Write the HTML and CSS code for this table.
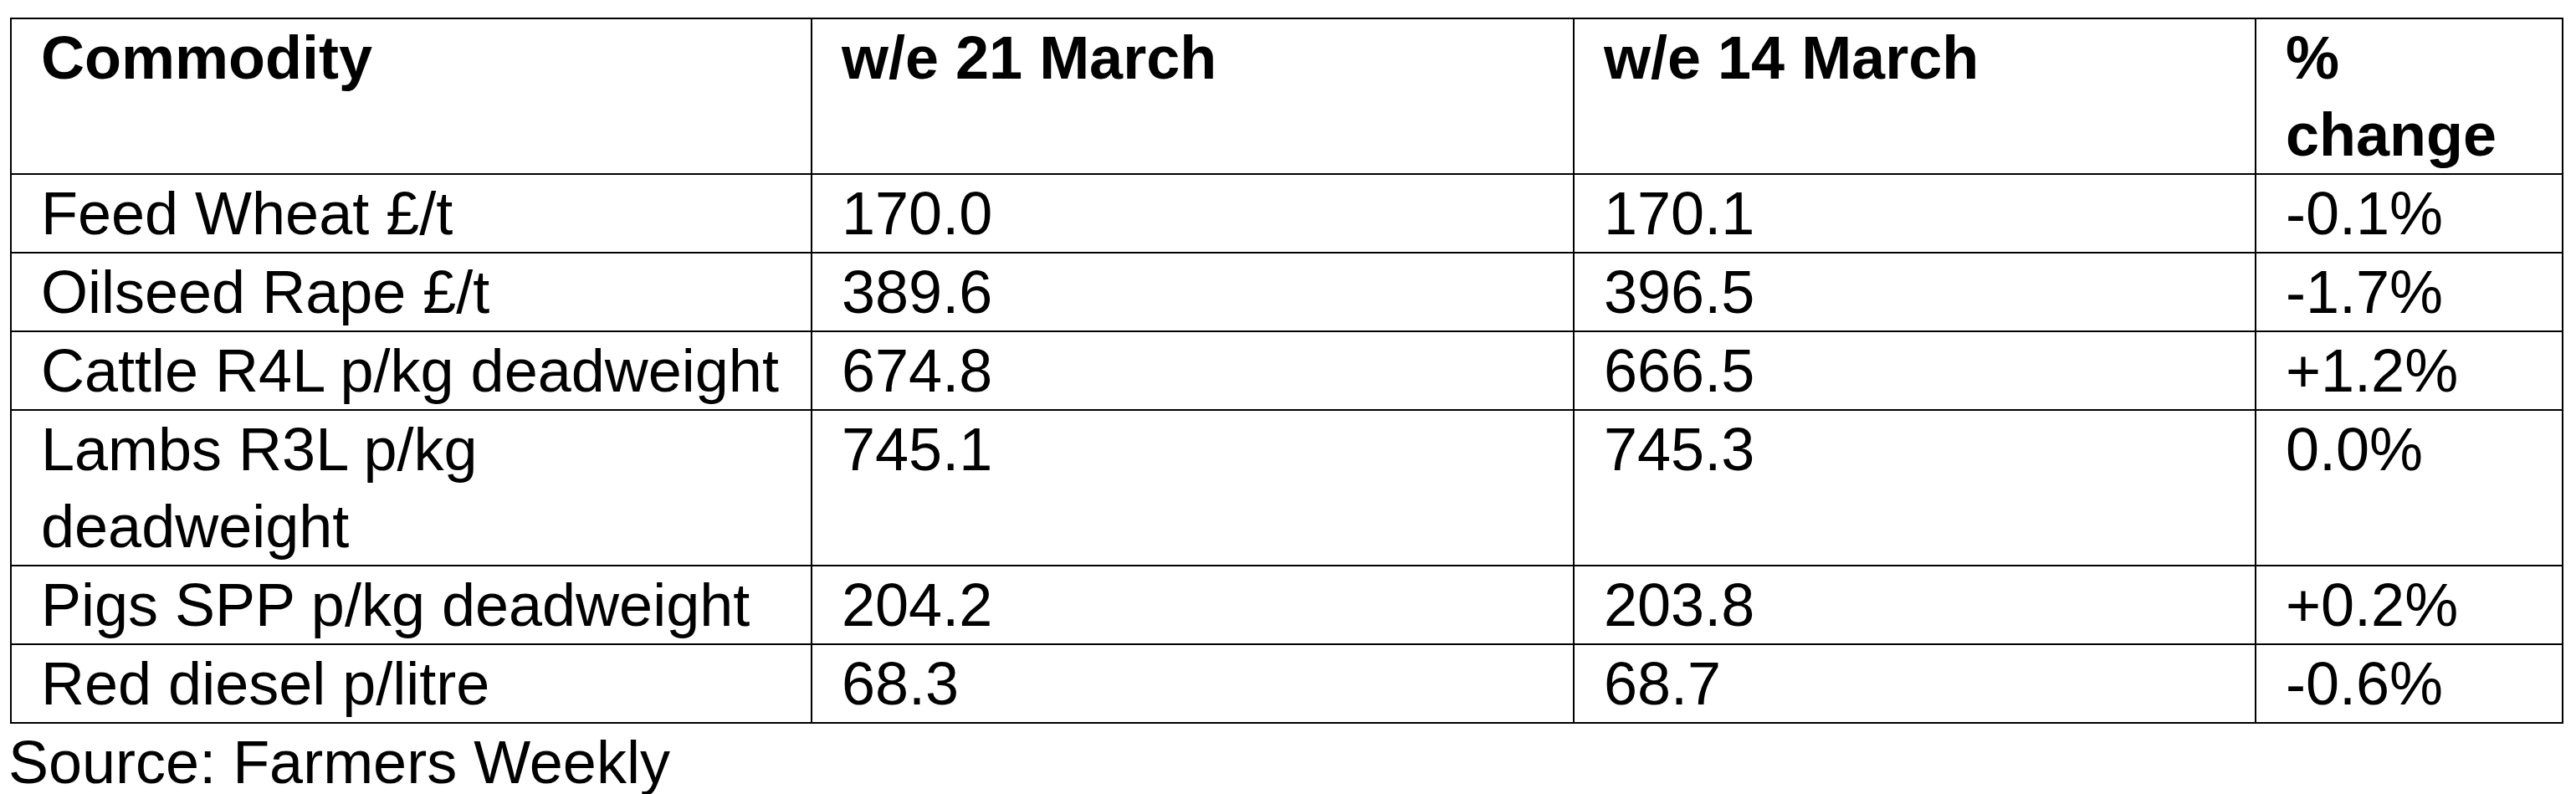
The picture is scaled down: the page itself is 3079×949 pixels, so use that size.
FILE: index.html
```html
<!DOCTYPE html>
<html lang="en">
<head>
<meta charset="utf-8">
<title>Commodity prices</title>
<link rel="stylesheet" href="styles.css">
</head>
<body>
<main class="page">
  <table class="prices">
    <colgroup>
      <col class="c-name">
      <col class="c-cur">
      <col class="c-prev">
      <col class="c-chg">
    </colgroup>
    <thead>
      <tr>
        <th>Commodity</th>
        <th>w/e 21 March</th>
        <th>w/e 14 March</th>
        <th>% change</th>
      </tr>
    </thead>
    <tbody>
      <tr><td>Feed Wheat £/t</td><td>170.0</td><td>170.1</td><td>-0.1%</td></tr>
      <tr><td>Oilseed Rape £/t</td><td>389.6</td><td>396.5</td><td>-1.7%</td></tr>
      <tr><td>Cattle R4L p/kg deadweight</td><td>674.8</td><td>666.5</td><td>+1.2%</td></tr>
      <tr><td>Lambs R3L p/kg deadweight</td><td>745.1</td><td>745.3</td><td>0.0%</td></tr>
      <tr><td>Pigs SPP p/kg deadweight</td><td>204.2</td><td>203.8</td><td>+0.2%</td></tr>
      <tr><td>Red diesel p/litre</td><td>68.3</td><td>68.7</td><td>-0.6%</td></tr>
    </tbody>
  </table>
  <p class="source">Source: Farmers Weekly</p>
</main>
</body>
</html>
```

FILE: styles.css
```css
html, body {
  margin: 0;
  padding: 0;
  background: #ffffff;
}

body {
  font-family: "Liberation Sans", Arial, sans-serif;
  font-size: 72px;
  line-height: 92px;
  color: #000000;
}

.page {
  padding: 21px 0 0 12px;
}

.prices {
  border-collapse: collapse;
  table-layout: fixed;
  width: 3050px;
}

.c-name { width: 957px; }
.c-cur  { width: 911px; }
.c-prev { width: 815px; }
.c-chg  { width: 367px; }

.prices th,
.prices td {
  border: 2px solid #000000;
  padding: 0 25px 0 35px;
  text-align: left;
  vertical-align: top;
}

.prices th {
  font-weight: 700;
}

.prices td {
  font-weight: 400;
}

.source {
  margin: 0 0 0 -2px;
}
```
